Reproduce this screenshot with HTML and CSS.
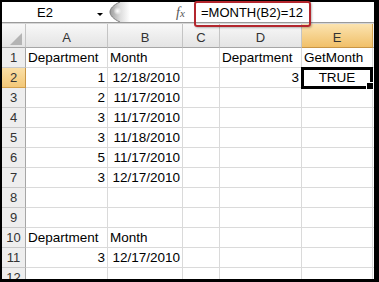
FILE: index.html
```html
<!DOCTYPE html>
<html>
<head>
<meta charset="utf-8">
<link rel="stylesheet" href="styles.css">
</head>
<body>
<div class="frame">
  <div class="fbar">
    <div class="namebox"><span class="name">E2</span><span class="arrow"></span></div>
    <svg class="grip" width="22" height="20" viewBox="0 0 22 20">
      <defs>
        <linearGradient id="gg" x1="0" x2="1" y1="0" y2="0">
          <stop offset="0" stop-color="#9c9c9c"/>
          <stop offset="0.5" stop-color="#dcdcdc"/>
          <stop offset="1" stop-color="#ffffff"/>
        </linearGradient>
        <radialGradient id="gw">
          <stop offset="0" stop-color="#ffffff"/>
          <stop offset="1" stop-color="#ffffff" stop-opacity="0"/>
        </radialGradient>
      </defs>
      <path d="M12 0 C5 3 2 7 2 10 C2 13 5 17 12 20 L22 20 L22 0 Z" fill="url(#gg)"/>
      <path d="M12 0 C5 3 2 7 2 10 C2 13 5 17 12 20" fill="none" stroke="#7c7c7c" stroke-width="1"/>
      <circle cx="9.5" cy="9" r="4" fill="url(#gw)"/>
    </svg>
    <div class="fx"><span class="f">f</span><span class="x">x</span></div>
    <div class="formula">=MONTH(B2)=12</div>
  </div>
  <div class="sep"></div>
  <div class="grid">
    <div class="h corner"></div><div class="h">A</div><div class="h">B</div><div class="h">C</div><div class="h">D</div><div class="h hl">E</div><div class="h"></div>

    <div class="rh">1</div><div class="c">Department</div><div class="c">Month</div><div class="c"></div><div class="c">Department</div><div class="c">GetMonth</div><div class="c"></div>
    <div class="rh hl">2</div><div class="c r">1</div><div class="c r">12/18/2010</div><div class="c"></div><div class="c r">3</div><div class="c m sel">TRUE</div><div class="c"></div>
    <div class="rh">3</div><div class="c r">2</div><div class="c r">11/17/2010</div><div class="c"></div><div class="c"></div><div class="c"></div><div class="c"></div>
    <div class="rh">4</div><div class="c r">3</div><div class="c r">11/17/2010</div><div class="c"></div><div class="c"></div><div class="c"></div><div class="c"></div>
    <div class="rh">5</div><div class="c r">3</div><div class="c r">11/18/2010</div><div class="c"></div><div class="c"></div><div class="c"></div><div class="c"></div>
    <div class="rh">6</div><div class="c r">5</div><div class="c r">11/17/2010</div><div class="c"></div><div class="c"></div><div class="c"></div><div class="c"></div>
    <div class="rh">7</div><div class="c r">3</div><div class="c r">12/17/2010</div><div class="c"></div><div class="c"></div><div class="c"></div><div class="c"></div>
    <div class="rh">8</div><div class="c"></div><div class="c"></div><div class="c"></div><div class="c"></div><div class="c"></div><div class="c"></div>
    <div class="rh">9</div><div class="c"></div><div class="c"></div><div class="c"></div><div class="c"></div><div class="c"></div><div class="c"></div>
    <div class="rh">10</div><div class="c">Department</div><div class="c">Month</div><div class="c"></div><div class="c"></div><div class="c"></div><div class="c"></div>
    <div class="rh">11</div><div class="c r">3</div><div class="c r">12/17/2010</div><div class="c"></div><div class="c"></div><div class="c"></div><div class="c"></div>
    <div class="rh">12</div><div class="c"></div><div class="c"></div><div class="c"></div><div class="c"></div><div class="c"></div><div class="c"></div>
  </div>
  <div class="callout"></div>
</div>
</body>
</html>
```
FILE: styles.css
```css
* { box-sizing: border-box; }
body {
  margin: 0;
  background: #000;
  font-family: "Liberation Sans", Arial, sans-serif;
  color: #000;
}
.frame {
  position: relative;
  width: 379px;
  height: 282px;
  border-style: solid;
  border-color: #000;
  border-width: 2px 5px 3px 2px;
  background: #fff;
}
.fbar {
  display: flex;
  height: 20px;
  background: #fff;
}
.namebox {
  display: flex;
  width: 106px;
}
.name {
  width: 86px;
  text-align: center;
  font-size: 13px;
  line-height: 18px;
  padding-top: 2px;
}
.arrow {
  margin: 11px 0 0 9px;
  width: 0;
  height: 0;
  border-style: solid;
  border-width: 3px 3px 0 3px;
  border-color: #000 transparent transparent transparent;
}
.grip { display: block; flex: none; }
.fx {
  margin-left: 46px;
  width: 18px;
  font-family: "Liberation Serif", "Times New Roman", serif;
  font-style: italic;
  color: #555;
  padding-top: 3px;
  line-height: 14px;
}
.fx .f { font-size: 14px; }
.fx .x { font-size: 11px; }
.formula {
  padding-left: 7px;
  font-size: 13px;
  line-height: 18px;
  padding-top: 2px;
  white-space: nowrap;
}
.sep {
  height: 2px;
  border-top: 1px solid #9a9a9a;
  background: #d6d6d6;
}
.grid {
  display: grid;
  grid-template-columns: 24px 82px 75px 37px 82px 71px 30px;
  grid-template-rows: 24px;
  grid-auto-rows: 20px;
  height: 255px;
  overflow: hidden;
}
.c {
  border-right: 1px solid #dadada;
  border-bottom: 1px solid #dadada;
  font-size: 13.5px;
  line-height: 20px;
  padding: 0 2px;
  white-space: nowrap;
}
.r { text-align: right; }
.m { text-align: center; }
.h {
  background: linear-gradient(#f8f8f8, #e4e4e4);
  border-right: 1px solid #c4c4c4;
  border-bottom: 1px solid #a6a6a6;
  text-align: center;
  font-size: 13px;
  line-height: 18px;
  padding-top: 5px;
  color: #333;
}
.rh {
  background: #eeeeee;
  border-right: 1px solid #a6a6a6;
  border-bottom: 1px solid #c8c8c8;
  text-align: center;
  font-size: 13px;
  line-height: 20px;
  color: #333;
}
.h.hl {
  background: linear-gradient(#fbe3b0, #f1c069);
  border-right-color: #d3a14e;
  border-bottom-color: #c89545;
}
.rh.hl {
  background: linear-gradient(#fadfa6, #f3c878);
  border-bottom-color: #d3a14e;
  border-right-color: #c89545;
}
.corner { position: relative; }
.corner::after {
  content: "";
  position: absolute;
  right: 3px;
  bottom: 2px;
  width: 0;
  height: 0;
  border-left: 12px solid transparent;
  border-bottom: 12px solid #b4b4b4;
}
.sel { position: relative; }
.sel::after {
  content: "";
  position: absolute;
  left: -1px;
  top: -1px;
  right: -1px;
  bottom: -2px;
  border: 3px solid #000;
}
.sel::before {
  content: "";
  position: absolute;
  right: -2px;
  bottom: -3px;
  width: 6px;
  height: 6px;
  background: #000;
  border: 1px solid #fff;
  z-index: 2;
}
.callout {
  position: absolute;
  left: 192px;
  top: -1px;
  width: 117px;
  height: 26px;
  border: 2px solid #b3262d;
  border-radius: 3px;
  box-shadow: 1px 1px 2px rgba(0, 0, 0, 0.25);
}
```
